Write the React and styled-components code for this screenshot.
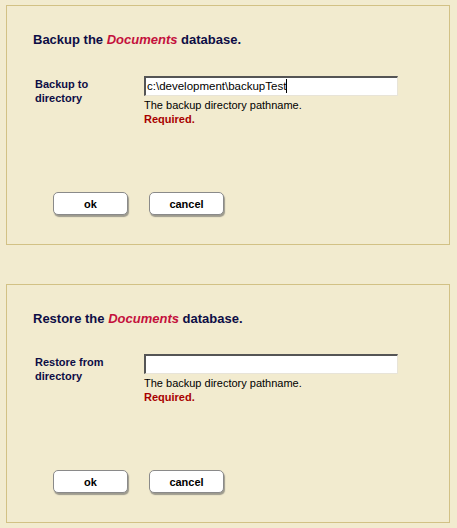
import React from "react"
import styled, { createGlobalStyle } from "styled-components"

const GlobalStyle = createGlobalStyle`
  html, body {
    margin: 0;
    padding: 0;
    background: #f2ebcf;
  }
`

const Page = styled.div`
  width: 457px;
  height: 528px;
  box-sizing: border-box;
  padding: 5px 7px 0 6px;
  background: #f2ebcf;
  font-family: "Liberation Sans", Arial, sans-serif;
`

const Panel = styled.div`
  height: ${p => p.$height}px;
  box-sizing: border-box;
  border: 1px solid #d2c185;
  padding: 25px 0 0 26px;
  margin-bottom: ${p => p.$gap || 0}px;
`

const Heading = styled.h2`
  margin: 0;
  font-family: "Liberation Sans", Arial, sans-serif;
  font-size: 13px;
  font-weight: bold;
  line-height: 18px;
  color: #0d0d45;
`

const DbName = styled.em`
  color: #c4103c;
  font-style: italic;
`

const Row = styled.div`
  display: grid;
  grid-template-columns: 111px 254px;
  margin-top: ${p => p.$top}px;
`

const Label = styled.div`
  padding: 1px 0 0 2px;
  font-size: 11px;
  font-weight: bold;
  line-height: 14px;
  color: #0d0d45;
`

const FieldCol = styled.div`
  display: flex;
  flex-direction: column;
`

const Field = styled.div`
  height: 20px;
  box-sizing: border-box;
  background: #fff;
  border-style: solid;
  border-width: 2px 1px 1px 2px;
  border-color: #555 #e8e4d8 #e8e4d8 #555;
  padding: 0 1px;
  font-size: 11.5px;
  line-height: 17px;
  color: #000;
  white-space: nowrap;
`

const Caret = styled.span`
  display: inline-block;
  width: 1px;
  height: 14px;
  background: #000;
  vertical-align: -3px;
`

const Hint = styled.div`
  margin-top: 2px;
  font-size: 11px;
  line-height: 14px;
  color: #000;
`

const Required = styled.div`
  font-size: 11px;
  font-weight: bold;
  line-height: 14px;
  color: #a80000;
`

const Buttons = styled.div`
  display: flex;
  gap: 21px;
  margin: 66px 0 0 20px;
`

const Button = styled.button`
  width: 75px;
  height: 23px;
  padding: 0;
  background: #fff;
  border: 1px solid #8a8a8a;
  border-radius: 5px;
  box-shadow: 1px 2px 1px rgba(90, 90, 90, 0.55);
  font-family: "Liberation Sans", Arial, sans-serif;
  font-size: 11px;
  font-weight: bold;
  color: #000;
`

const DbForm = ({ action, label, value, rowTop }) => (
  <>
    <Heading>
      {action} the <DbName>Documents</DbName> database.
    </Heading>
    <Row $top={rowTop}>
      <Label>{label}</Label>
      <FieldCol>
        <Field>
          {value}
          {value && <Caret />}
        </Field>
        <Hint>The backup directory pathname.</Hint>
        <Required>Required.</Required>
      </FieldCol>
    </Row>
    <Buttons>
      <Button>ok</Button>
      <Button>cancel</Button>
    </Buttons>
  </>
)

export default function App() {
  return (
    <Page>
      <GlobalStyle />
      <Panel $height={240} $gap={39}>
        <DbForm
          action="Backup"
          label={<>Backup to<br />directory</>}
          value="c:\development\backupTest"
          rowTop={27}
        />
      </Panel>
      <Panel $height={239}>
        <DbForm
          action="Restore"
          label={<>Restore from<br />directory</>}
          value=""
          rowTop={26}
        />
      </Panel>
    </Page>
  )
}
